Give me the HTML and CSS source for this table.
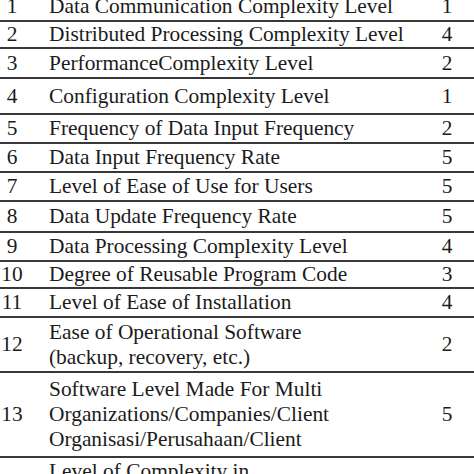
FILE: index.html
```html
<!DOCTYPE html>
<html>
<head>
<meta charset="utf-8">
<link rel="stylesheet" href="styles.css">
</head>
<body>
<div class="table">
  <div class="row h30"><div class="no">1</div><div class="txt">Data Communication Complexity Level</div><div class="val">1</div></div>
  <div class="row h27"><div class="no">2</div><div class="txt">Distributed Processing Complexity Level</div><div class="val">4</div></div>
  <div class="row h30"><div class="no">3</div><div class="txt">PerformanceComplexity Level</div><div class="val">2</div></div>
  <div class="row h36"><div class="no">4</div><div class="txt">Configuration Complexity Level</div><div class="val">1</div></div>
  <div class="row h29"><div class="no">5</div><div class="txt">Frequency of Data Input Frequency</div><div class="val">2</div></div>
  <div class="row h29"><div class="no">6</div><div class="txt">Data Input Frequency Rate</div><div class="val">5</div></div>
  <div class="row h29"><div class="no">7</div><div class="txt">Level of Ease of Use for Users</div><div class="val">5</div></div>
  <div class="row h31"><div class="no">8</div><div class="txt">Data Update Frequency Rate</div><div class="val">5</div></div>
  <div class="row h29"><div class="no">9</div><div class="txt">Data Processing Complexity Level</div><div class="val">4</div></div>
  <div class="row h27"><div class="no">10</div><div class="txt">Degree of Reusable Program Code</div><div class="val">3</div></div>
  <div class="row h29"><div class="no">11</div><div class="txt">Level of Ease of Installation</div><div class="val">4</div></div>
  <div class="row h55"><div class="no">12</div><div class="txt">Ease of Operational Software<br>(backup, recovery, etc.)</div><div class="val">2</div></div>
  <div class="row h85"><div class="no">13</div><div class="txt">Software Level Made For Multi<br>Organizations/Companies/Client<br>Organisasi/Perusahaan/Client</div><div class="val">5</div></div>
  <div class="row last"><div class="no"></div><div class="txt">Level of Complexity in<br>Software Maintenance</div><div class="val"></div></div>
</div>
</body>
</html>
```
FILE: styles.css
```css
html, body {
  margin: 0;
  padding: 0;
  background: #ffffff;
}
body {
  width: 474px;
  height: 474px;
  overflow: hidden;
  font-family: "Liberation Serif", "Times New Roman", serif;
  font-size: 21.4px;
  line-height: 25px;
  color: #1b1b1b;
}
.table {
  margin-top: -8px;
  width: 474px;
}
.row {
  display: grid;
  grid-template-columns: 24px 1fr 54px;
  align-items: center;
  box-sizing: border-box;
  border-bottom: 2px solid #383838;
}
.no {
  text-align: center;
}
.txt {
  padding-left: 25px;
  white-space: nowrap;
}
.val {
  text-align: center;
}
.h27 { height: 27px; }
.h29 { height: 29px; }
.h30 { height: 30px; }
.h31 { height: 31px; }
.h36 { height: 36px; }
.h55 { height: 55px; }
.h85 { height: 85px; }
.last {
  align-items: start;
  padding-top: 1px;
  height: 80px;
  border-bottom: none;
}
```
